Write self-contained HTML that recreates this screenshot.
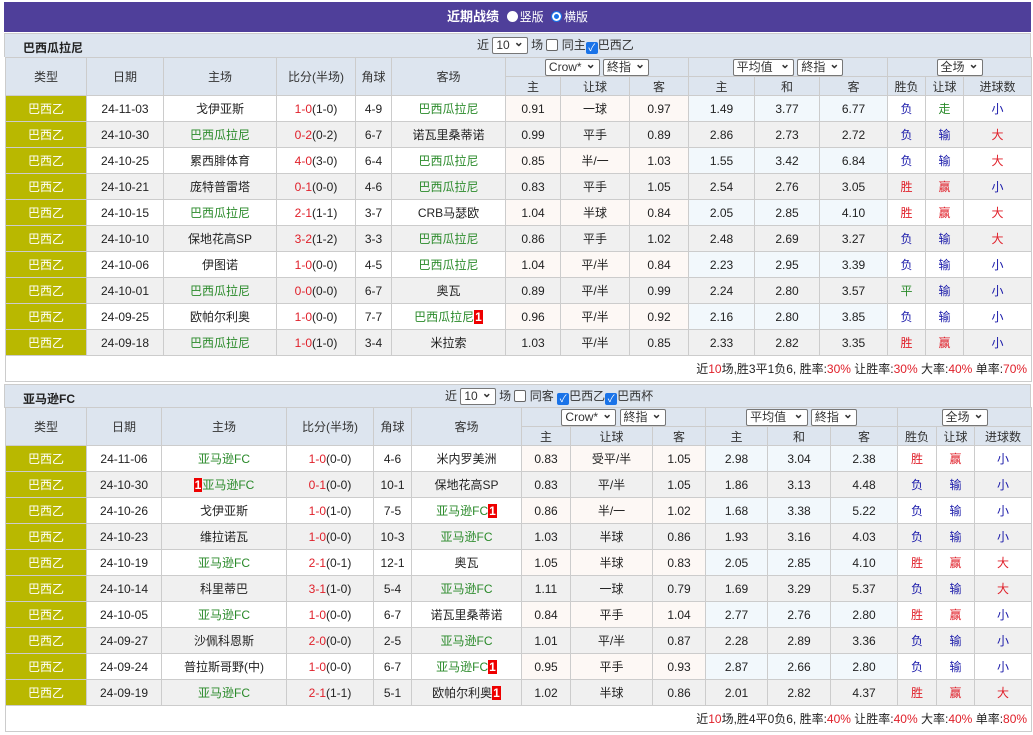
<!DOCTYPE html>
<html><head><meta charset="utf-8"><style>
*{box-sizing:border-box}
body{margin:0;background:#fff;font-family:"Liberation Sans","Noto Sans CJK SC",sans-serif;font-size:12px;color:#222;width:1033px;height:735px;overflow:hidden;position:relative}
.title{position:absolute;left:4px;top:2px;width:1027px;height:30px;background:#4f3f9a;color:#fff;text-align:center;line-height:30px;font-weight:bold;font-size:13px}
.title .rr{font-weight:normal;font-size:12px;color:#fff}
.radio{display:inline-block;width:11px;height:11px;border-radius:50%;background:#fff;vertical-align:-1px;margin:0 2px 0 4px}
.radio.on{box-shadow:inset 0 0 0 2px #fff,inset 0 0 0 6px #1a73e8;border:1px solid #1a73e8}
.sh{position:absolute;left:4px;width:1027px;height:24px;background:#dde5ef;border:1px solid #ccc;border-bottom:none}
.sh b{position:absolute;left:18px;top:5px;font-size:12px}
.sh .ctl{position:absolute;top:3px;font-size:12px;color:#333;line-height:17px}
.sel{display:inline-block;border:1px solid #777;background:#fff;height:17px;line-height:15px;padding:0 3px;font-size:12px;border-radius:2px;vertical-align:middle}
.sel:after{content:"⌄";font-weight:bold;margin-left:4px;position:relative;top:-3px}
.cb{display:inline-block;width:12px;height:12px;border:1px solid #666;border-radius:2px;background:#fff;vertical-align:-2px}
.cb.on{background:#1a73e8;border-color:#1a73e8;color:#fff;font-size:10px;line-height:11px;text-align:center}
table{position:absolute;left:5px;border-collapse:collapse;table-layout:fixed;width:1026px}
td{border:1px solid #ccc;text-align:center;padding:0;white-space:nowrap;overflow:hidden}
thead td{background:#dde5ef;color:#333;height:19px}
tbody td{height:26px}
tbody tr:nth-child(even) td{background:#f0f0f0}
tbody tr:nth-child(odd) td.o1{background:#fdf8f5}
tbody tr:nth-child(odd) td.o2{background:#f2f8fc}
td.lg{background:#b9b800!important;color:#fff}
.g{color:#2a8a2a}.r{color:#e0202a}.b{color:#1a1aaa}
.n{background:#e00;color:#fff;font-weight:bold;padding:0 1px}
.sum{height:26px;text-align:right;padding-right:4px;background:#fff!important}
</style></head><body>
<div class="title">近期战绩 <span class="rr"><span class="radio"></span>竖版 <span class="radio on"></span>横版</span></div>

<div class="sh" style="top:33px"><b>巴西瓜拉尼</b><span class="ctl" style="left:472px">近 <span class="sel">10</span> 场 <span class="cb"></span> 同主<span class="cb on">✓</span>巴西乙</span></div>
<table style="top:57px">
<colgroup><col width="81"><col width="77"><col width="113"><col width="79"><col width="36"><col width="114"><col width="55"><col width="69"><col width="59"><col width="66"><col width="65"><col width="68"><col width="38"><col width="38"><col width="68"></colgroup>
<thead>
<tr><td rowspan="2">类型</td><td rowspan="2">日期</td><td rowspan="2">主场</td><td rowspan="2">比分(半场)</td><td rowspan="2">角球</td><td rowspan="2">客场</td><td colspan="3"><span class="sel">Crow*</span> <span class="sel">終指</span></td><td colspan="3"><span class="sel">平均值 </span> <span class="sel">終指</span></td><td colspan="3"><span class="sel">全场</span></td></tr>
<tr><td>主</td><td>让球</td><td>客</td><td>主</td><td>和</td><td>客</td><td>胜负</td><td>让球</td><td>进球数</td></tr>
</thead>
<tbody>
<tr><td class="lg">巴西乙</td><td>24-11-03</td><td>戈伊亚斯</td><td><span class="r">1-0</span>(1-0)</td><td>4-9</td><td class="g">巴西瓜拉尼</td><td class="o1">0.91</td><td class="o1">一球</td><td class="o1">0.97</td><td class="o2">1.49</td><td class="o2">3.77</td><td class="o2">6.77</td><td class="b">负</td><td class="g">走</td><td class="b">小</td></tr>
<tr><td class="lg">巴西乙</td><td>24-10-30</td><td class="g">巴西瓜拉尼</td><td><span class="r">0-2</span>(0-2)</td><td>6-7</td><td>诺瓦里桑蒂诺</td><td class="o1">0.99</td><td class="o1">平手</td><td class="o1">0.89</td><td class="o2">2.86</td><td class="o2">2.73</td><td class="o2">2.72</td><td class="b">负</td><td class="b">输</td><td class="r">大</td></tr>
<tr><td class="lg">巴西乙</td><td>24-10-25</td><td>累西腓体育</td><td><span class="r">4-0</span>(3-0)</td><td>6-4</td><td class="g">巴西瓜拉尼</td><td class="o1">0.85</td><td class="o1">半/一</td><td class="o1">1.03</td><td class="o2">1.55</td><td class="o2">3.42</td><td class="o2">6.84</td><td class="b">负</td><td class="b">输</td><td class="r">大</td></tr>
<tr><td class="lg">巴西乙</td><td>24-10-21</td><td>庞特普雷塔</td><td><span class="r">0-1</span>(0-0)</td><td>4-6</td><td class="g">巴西瓜拉尼</td><td class="o1">0.83</td><td class="o1">平手</td><td class="o1">1.05</td><td class="o2">2.54</td><td class="o2">2.76</td><td class="o2">3.05</td><td class="r">胜</td><td class="r">赢</td><td class="b">小</td></tr>
<tr><td class="lg">巴西乙</td><td>24-10-15</td><td class="g">巴西瓜拉尼</td><td><span class="r">2-1</span>(1-1)</td><td>3-7</td><td>CRB马瑟欧</td><td class="o1">1.04</td><td class="o1">半球</td><td class="o1">0.84</td><td class="o2">2.05</td><td class="o2">2.85</td><td class="o2">4.10</td><td class="r">胜</td><td class="r">赢</td><td class="r">大</td></tr>
<tr><td class="lg">巴西乙</td><td>24-10-10</td><td>保地花高SP</td><td><span class="r">3-2</span>(1-2)</td><td>3-3</td><td class="g">巴西瓜拉尼</td><td class="o1">0.86</td><td class="o1">平手</td><td class="o1">1.02</td><td class="o2">2.48</td><td class="o2">2.69</td><td class="o2">3.27</td><td class="b">负</td><td class="b">输</td><td class="r">大</td></tr>
<tr><td class="lg">巴西乙</td><td>24-10-06</td><td>伊图诺</td><td><span class="r">1-0</span>(0-0)</td><td>4-5</td><td class="g">巴西瓜拉尼</td><td class="o1">1.04</td><td class="o1">平/半</td><td class="o1">0.84</td><td class="o2">2.23</td><td class="o2">2.95</td><td class="o2">3.39</td><td class="b">负</td><td class="b">输</td><td class="b">小</td></tr>
<tr><td class="lg">巴西乙</td><td>24-10-01</td><td class="g">巴西瓜拉尼</td><td><span class="r">0-0</span>(0-0)</td><td>6-7</td><td>奥瓦</td><td class="o1">0.89</td><td class="o1">平/半</td><td class="o1">0.99</td><td class="o2">2.24</td><td class="o2">2.80</td><td class="o2">3.57</td><td class="g">平</td><td class="b">输</td><td class="b">小</td></tr>
<tr><td class="lg">巴西乙</td><td>24-09-25</td><td>欧帕尔利奥</td><td><span class="r">1-0</span>(0-0)</td><td>7-7</td><td class="g">巴西瓜拉尼<span class="n">1</span></td><td class="o1">0.96</td><td class="o1">平/半</td><td class="o1">0.92</td><td class="o2">2.16</td><td class="o2">2.80</td><td class="o2">3.85</td><td class="b">负</td><td class="b">输</td><td class="b">小</td></tr>
<tr><td class="lg">巴西乙</td><td>24-09-18</td><td class="g">巴西瓜拉尼</td><td><span class="r">1-0</span>(1-0)</td><td>3-4</td><td>米拉索</td><td class="o1">1.03</td><td class="o1">平/半</td><td class="o1">0.85</td><td class="o2">2.33</td><td class="o2">2.82</td><td class="o2">3.35</td><td class="r">胜</td><td class="r">赢</td><td class="b">小</td></tr>
<tr><td colspan="15" class="sum">近<span class="r">10</span>场,胜3平1负6, 胜率:<span class="r">30%</span> 让胜率:<span class="r">30%</span> 大率:<span class="r">40%</span> 单率:<span class="r">70%</span></td></tr>
</tbody></table>

<div class="sh" style="top:384px"><b>亚马逊FC</b><span class="ctl" style="left:440px">近 <span class="sel">10</span> 场 <span class="cb"></span> 同客 <span class="cb on">✓</span>巴西乙<span class="cb on">✓</span>巴西杯</span></div>
<table style="top:407px">
<colgroup><col width="81"><col width="75"><col width="125"><col width="87"><col width="38"><col width="110"><col width="49"><col width="82"><col width="53"><col width="62"><col width="63"><col width="67"><col width="39"><col width="38"><col width="57"></colgroup>
<thead>
<tr><td rowspan="2">类型</td><td rowspan="2">日期</td><td rowspan="2">主场</td><td rowspan="2">比分(半场)</td><td rowspan="2">角球</td><td rowspan="2">客场</td><td colspan="3"><span class="sel">Crow*</span> <span class="sel">終指</span></td><td colspan="3"><span class="sel">平均值 </span> <span class="sel">終指</span></td><td colspan="3"><span class="sel">全场</span></td></tr>
<tr><td>主</td><td>让球</td><td>客</td><td>主</td><td>和</td><td>客</td><td>胜负</td><td>让球</td><td>进球数</td></tr>
</thead>
<tbody>
<tr><td class="lg">巴西乙</td><td>24-11-06</td><td class="g">亚马逊FC</td><td><span class="r">1-0</span>(0-0)</td><td>4-6</td><td>米内罗美洲</td><td class="o1">0.83</td><td class="o1">受平/半</td><td class="o1">1.05</td><td class="o2">2.98</td><td class="o2">3.04</td><td class="o2">2.38</td><td class="r">胜</td><td class="r">赢</td><td class="b">小</td></tr>
<tr><td class="lg">巴西乙</td><td>24-10-30</td><td class="g"><span class="n">1</span>亚马逊FC</td><td><span class="r">0-1</span>(0-0)</td><td>10-1</td><td>保地花高SP</td><td class="o1">0.83</td><td class="o1">平/半</td><td class="o1">1.05</td><td class="o2">1.86</td><td class="o2">3.13</td><td class="o2">4.48</td><td class="b">负</td><td class="b">输</td><td class="b">小</td></tr>
<tr><td class="lg">巴西乙</td><td>24-10-26</td><td>戈伊亚斯</td><td><span class="r">1-0</span>(1-0)</td><td>7-5</td><td class="g">亚马逊FC<span class="n">1</span></td><td class="o1">0.86</td><td class="o1">半/一</td><td class="o1">1.02</td><td class="o2">1.68</td><td class="o2">3.38</td><td class="o2">5.22</td><td class="b">负</td><td class="b">输</td><td class="b">小</td></tr>
<tr><td class="lg">巴西乙</td><td>24-10-23</td><td>维拉诺瓦</td><td><span class="r">1-0</span>(0-0)</td><td>10-3</td><td class="g">亚马逊FC</td><td class="o1">1.03</td><td class="o1">半球</td><td class="o1">0.86</td><td class="o2">1.93</td><td class="o2">3.16</td><td class="o2">4.03</td><td class="b">负</td><td class="b">输</td><td class="b">小</td></tr>
<tr><td class="lg">巴西乙</td><td>24-10-19</td><td class="g">亚马逊FC</td><td><span class="r">2-1</span>(0-1)</td><td>12-1</td><td>奥瓦</td><td class="o1">1.05</td><td class="o1">半球</td><td class="o1">0.83</td><td class="o2">2.05</td><td class="o2">2.85</td><td class="o2">4.10</td><td class="r">胜</td><td class="r">赢</td><td class="r">大</td></tr>
<tr><td class="lg">巴西乙</td><td>24-10-14</td><td>科里蒂巴</td><td><span class="r">3-1</span>(1-0)</td><td>5-4</td><td class="g">亚马逊FC</td><td class="o1">1.11</td><td class="o1">一球</td><td class="o1">0.79</td><td class="o2">1.69</td><td class="o2">3.29</td><td class="o2">5.37</td><td class="b">负</td><td class="b">输</td><td class="r">大</td></tr>
<tr><td class="lg">巴西乙</td><td>24-10-05</td><td class="g">亚马逊FC</td><td><span class="r">1-0</span>(0-0)</td><td>6-7</td><td>诺瓦里桑蒂诺</td><td class="o1">0.84</td><td class="o1">平手</td><td class="o1">1.04</td><td class="o2">2.77</td><td class="o2">2.76</td><td class="o2">2.80</td><td class="r">胜</td><td class="r">赢</td><td class="b">小</td></tr>
<tr><td class="lg">巴西乙</td><td>24-09-27</td><td>沙佩科恩斯</td><td><span class="r">2-0</span>(0-0)</td><td>2-5</td><td class="g">亚马逊FC</td><td class="o1">1.01</td><td class="o1">平/半</td><td class="o1">0.87</td><td class="o2">2.28</td><td class="o2">2.89</td><td class="o2">3.36</td><td class="b">负</td><td class="b">输</td><td class="b">小</td></tr>
<tr><td class="lg">巴西乙</td><td>24-09-24</td><td>普拉斯哥野(中)</td><td><span class="r">1-0</span>(0-0)</td><td>6-7</td><td class="g">亚马逊FC<span class="n">1</span></td><td class="o1">0.95</td><td class="o1">平手</td><td class="o1">0.93</td><td class="o2">2.87</td><td class="o2">2.66</td><td class="o2">2.80</td><td class="b">负</td><td class="b">输</td><td class="b">小</td></tr>
<tr><td class="lg">巴西乙</td><td>24-09-19</td><td class="g">亚马逊FC</td><td><span class="r">2-1</span>(1-1)</td><td>5-1</td><td>欧帕尔利奥<span class="n">1</span></td><td class="o1">1.02</td><td class="o1">半球</td><td class="o1">0.86</td><td class="o2">2.01</td><td class="o2">2.82</td><td class="o2">4.37</td><td class="r">胜</td><td class="r">赢</td><td class="r">大</td></tr>
<tr><td colspan="15" class="sum">近<span class="r">10</span>场,胜4平0负6, 胜率:<span class="r">40%</span> 让胜率:<span class="r">40%</span> 大率:<span class="r">40%</span> 单率:<span class="r">80%</span></td></tr>
</tbody></table>
</body></html>
